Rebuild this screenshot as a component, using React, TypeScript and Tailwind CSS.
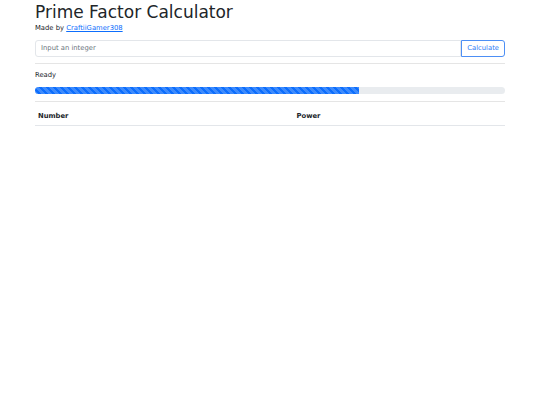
export default function App() {
  const progress = 69

  return (
    <div className="min-h-[405px] bg-white text-[#212529] font-['DejaVu_Sans',sans-serif]">
      <div className="w-[470px] mx-auto">
        <h1 className="text-[17px] leading-[22px] font-normal pt-[1px]">Prime Factor Calculator</h1>
        <p className="text-[6.8px] leading-[10px]">
          Made by{' '}
          <a href="#" className="text-[#0d6efd] underline">
            CraftiiGamer308
          </a>
        </p>

        <div className="flex mt-[7px] h-[17px]">
          <input
            className="flex-1 min-w-0 border border-[#e3e6ea] rounded-l-[3px] px-[5px] text-[6.8px] text-[#212529] placeholder:text-[#6c757d] outline-none"
            placeholder="Input an integer"
          />
          <button className="border border-[#4d8ff5] text-[#2f7cf6] text-[6.8px] px-[5px] rounded-r-[3px] bg-white">
            Calculate
          </button>
        </div>

        <hr className="mt-[6px] border-t border-[#e5e5e5]" />

        <p className="text-[6.8px] leading-[10px] mt-[6px]">Ready</p>

        <div className="mt-[7px] h-[7px] rounded-[4px] bg-[#e9ecef] overflow-hidden flex">
          <div
            className="h-full bg-[#0d6efd] bg-[linear-gradient(45deg,rgba(255,255,255,.2)_25%,transparent_25%,transparent_50%,rgba(255,255,255,.2)_50%,rgba(255,255,255,.2)_75%,transparent_75%,transparent)] bg-size-[7px_7px]"
            style={{ width: `${progress}%` }}
          />
        </div>

        <hr className="mt-[7px] border-t border-[#e5e5e5]" />

        <table className="w-full mt-[7px] text-[6.8px] text-left">
          <thead>
            <tr className="border-b border-[#e3e6ea]">
              <th className="font-bold leading-[10px] px-[3px] pt-[2px] pb-[4px] w-[55%]">Number</th>
              <th className="font-bold leading-[10px] px-[3px] pt-[2px] pb-[4px]">Power</th>
            </tr>
          </thead>
        </table>
      </div>
    </div>
  )
}
